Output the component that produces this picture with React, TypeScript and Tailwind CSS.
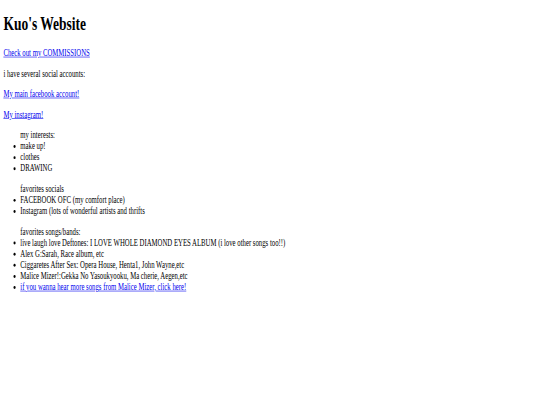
const link = "text-[#0000EE] underline";

export default function App() {
  return (
    <div className="w-[540px] h-[405px] overflow-hidden bg-white">
      {/* page drawn at normal size, then squeezed like the screenshot */}
      <div className="w-[1280px] origin-top-left scale-x-[0.422] scale-y-[0.585] pt-[21.44px] px-2 font-['Liberation_Serif','Times_New_Roman',serif] text-[16px] leading-[19px] text-black">
        <h1 className="text-[32px] leading-[38px] font-bold mb-[21.44px]">Kuo's Website</h1>

        <p className="my-4">
          <a href="#" className={link}>Check out my COMMISSIONS</a>
        </p>
        <p className="my-4">i have several social accounts:</p>
        <p className="my-4">
          <a href="#" className={link}>My main facebook account!</a>
        </p>
        <p className="my-4">
          <a href="#" className={link}>My instagram!</a>
        </p>

        <ul className="list-disc pl-10 my-4">
          my interests:
          <li>make up!</li>
          <li>clothes</li>
          <li>DRAWING</li>
        </ul>

        <ul className="list-disc pl-10 my-4">
          favorites socials
          <li>FACEBOOK OFC (my comfort place)</li>
          <li>Instagram (lots of wonderful artists and thrifts</li>
        </ul>

        <ul className="list-disc pl-10 my-4">
          favorites songs/bands:
          <li>live laugh love Deftones: I LOVE WHOLE DIAMOND EYES ALBUM (i love other songs too!!)</li>
          <li>Alex G:Sarah, Race album, etc</li>
          <li>Ciggaretes After Sex: Opera House, Henta1, John Wayne,etc</li>
          <li>Malice Mizer!:Gekka No Yasoukyooku, Ma cherie, Aegen,etc</li>
          <li>
            <a href="#" className={link}>if you wanna hear more songs from Malice Mizer, click here!</a>
          </li>
        </ul>
      </div>
    </div>
  );
}
